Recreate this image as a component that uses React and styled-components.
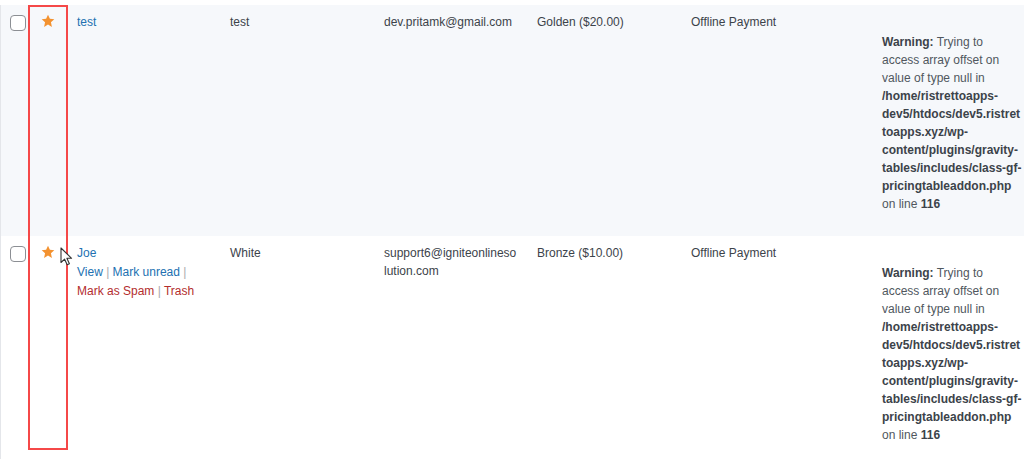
import React from 'react'
import styled, { createGlobalStyle } from 'styled-components'

const GlobalStyle = createGlobalStyle`
  html, body {
    margin: 0;
    padding: 0;
    background: #ffffff;
  }
  body {
    font-family: "Liberation Sans", Arial, sans-serif;
    font-size: 12px;
    color: #3c434a;
  }
`;

const Page = styled.div`
  position: relative;
  width: 1024px;
  height: 459px;
  overflow: hidden;
  padding-top: 5px;
  box-sizing: border-box;
`;

const Table = styled.div`
  border-left: 1px solid #e4e6ea;
`;

const Row = styled.div`
  display: grid;
  grid-template-columns: 30px 37px 153px 154px 153px 154px 191px 1fr;
  padding-left: 9px;
  background: ${({ $striped }) => ($striped ? '#f6f8fb' : '#ffffff')};
  line-height: 18px;
`;

const Cell = styled.div`
  padding: 8px 10px 8px 0;
  min-width: 0;
`;

const EmailCell = styled(Cell)`
  padding-right: 19px;
  overflow-wrap: anywhere;
`;

const CheckCell = styled.div`
  padding-top: 10px;
`;

const Checkbox = styled.span`
  display: block;
  width: 16px;
  height: 16px;
  box-sizing: border-box;
  border: 1px solid #8c8f94;
  border-radius: 4px;
  background: #fff;
`;

const StarCell = styled.div`
  padding: 9px 0 0 1px;
  svg {
    display: block;
  }
`;

const NameLink = styled.a`
  color: #2271b1;
  text-decoration: none;
`;

const Actions = styled.div`
  color: #a7aaad;
  margin-top: 1px;
  line-height: 19px;
`;

const Action = styled.span`
  white-space: nowrap;
  a {
    color: ${({ $danger }) => ($danger ? '#b32d2e' : '#2271b1')};
    text-decoration: none;
  }
`;

const Notice = styled.div`
  margin: 20px 0 15px;
  white-space: nowrap;
  color: #50575e;
  b {
    color: #3c434a;
  }
`;

const Highlight = styled.div`
  position: absolute;
  left: 28px;
  top: 5px;
  width: 40px;
  height: 445px;
  box-sizing: border-box;
  border: 2px solid #f54848;
  pointer-events: none;
`;

const Pointer = styled.svg`
  position: absolute;
  left: 60px;
  top: 247px;
`;

const Star = () => (
  <svg width="14" height="14" viewBox="0 0 20 20">
    <polygon
      points="10,1 12.7,6.9 19,7.6 14.2,11.9 15.6,18.4 10,15 4.4,18.4 5.8,11.9 1,7.6 7.3,6.9"
      fill="#f39230"
    />
  </svg>
);

// PHP notice, wrapped the way the column wraps it in the screenshot
const Warning = () => (
  <Notice>
    <b>Warning:</b> Trying to<br />
    access array offset on<br />
    value of type null in<br />
    <b>
      /home/ristrettoapps-<br />
      dev5/htdocs/dev5.ristret<br />
      toapps.xyz/wp-<br />
      content/plugins/gravity-<br />
      tables/includes/class-gf-<br />
      pricingtableaddon.php
    </b>
    <br />
    on line <b>116</b>
  </Notice>
);

const entries = [
  {
    name: 'test',
    last: 'test',
    email: 'dev.pritamk@gmail.com',
    plan: 'Golden ($20.00)',
    payment: 'Offline Payment',
    striped: true,
    actions: false,
  },
  {
    name: 'Joe',
    last: 'White',
    email: 'support6@igniteonlinesolution.com',
    plan: 'Bronze ($10.00)',
    payment: 'Offline Payment',
    striped: false,
    actions: true,
  },
];

const App = () => {
  return (
    <Page>
      <GlobalStyle />
      <Table>
        {entries.map((e) => (
          <Row key={e.email} $striped={e.striped}>
            <CheckCell>
              <Checkbox />
            </CheckCell>
            <StarCell>
              <Star />
            </StarCell>
            <Cell>
              <NameLink href="#">{e.name}</NameLink>
              {e.actions && (
                <Actions>
                  <Action><a href="#">View</a> |</Action>{' '}
                  <Action><a href="#">Mark unread</a> |</Action>{' '}
                  <Action $danger><a href="#">Mark as Spam</a> |</Action>{' '}
                  <Action $danger><a href="#">Trash</a></Action>
                </Actions>
              )}
            </Cell>
            <Cell>{e.last}</Cell>
            <EmailCell>{e.email}</EmailCell>
            <Cell>{e.plan}</Cell>
            <Cell>{e.payment}</Cell>
            <Cell>
              <Warning />
            </Cell>
          </Row>
        ))}
      </Table>
      <Highlight />
      <Pointer width="13" height="19" viewBox="0 0 13 19">
        <path
          d="M1 1 L1 15.5 L4.6 12.2 L7.2 17.8 L9.4 16.8 L6.9 11.3 L11.6 11.3 Z"
          fill="#ffffff"
          stroke="#333333"
          strokeWidth="1.1"
          strokeLinejoin="round"
        />
      </Pointer>
    </Page>
  )
}

export default App
